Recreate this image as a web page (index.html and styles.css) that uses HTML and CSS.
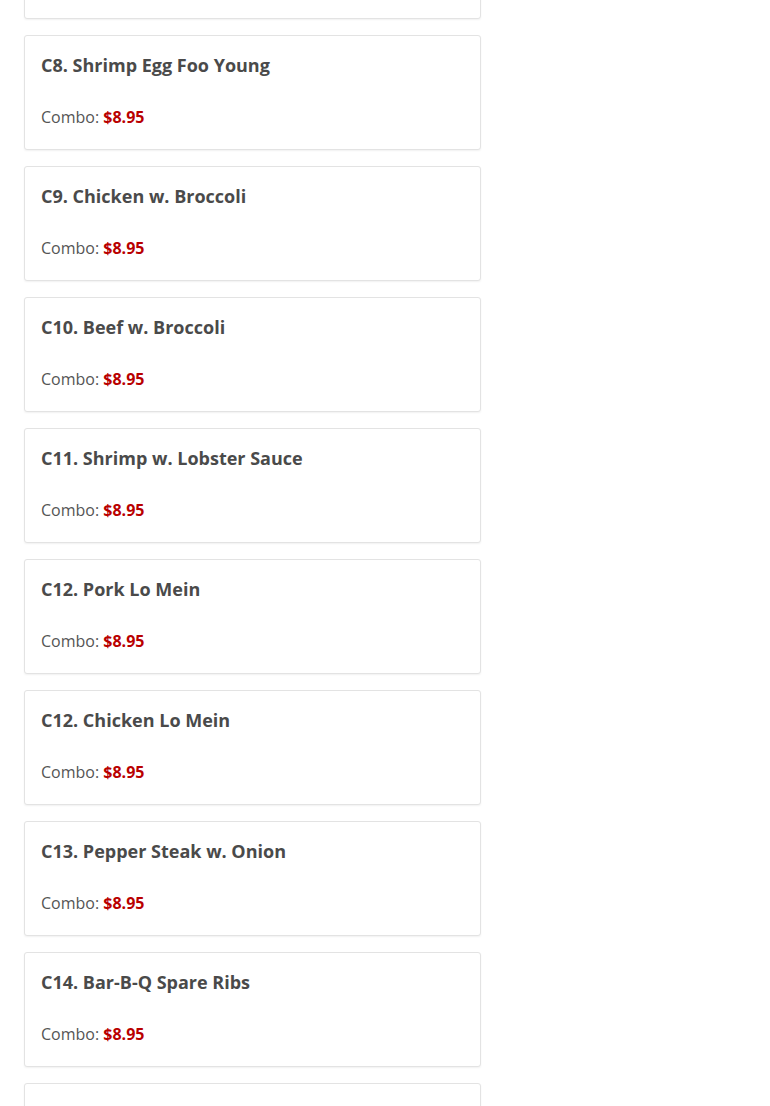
FILE: index.html
```html
<!DOCTYPE html>
<html lang="en">
<head>
<meta charset="utf-8">
<title>Combo Menu</title>
<link rel="stylesheet" href="styles.css">
</head>
<body>
<div class="menu">
  <div class="item"></div>
  <div class="item"><h3 class="item-name">C8. Shrimp Egg Foo Young</h3><p class="item-price">Combo: <span class="price">$8.95</span></p></div>
  <div class="item"><h3 class="item-name">C9. Chicken w. Broccoli</h3><p class="item-price">Combo: <span class="price">$8.95</span></p></div>
  <div class="item"><h3 class="item-name">C10. Beef w. Broccoli</h3><p class="item-price">Combo: <span class="price">$8.95</span></p></div>
  <div class="item"><h3 class="item-name">C11. Shrimp w. Lobster Sauce</h3><p class="item-price">Combo: <span class="price">$8.95</span></p></div>
  <div class="item"><h3 class="item-name">C12. Pork Lo Mein</h3><p class="item-price">Combo: <span class="price">$8.95</span></p></div>
  <div class="item"><h3 class="item-name">C12. Chicken Lo Mein</h3><p class="item-price">Combo: <span class="price">$8.95</span></p></div>
  <div class="item"><h3 class="item-name">C13. Pepper Steak w. Onion</h3><p class="item-price">Combo: <span class="price">$8.95</span></p></div>
  <div class="item"><h3 class="item-name">C14. Bar-B-Q Spare Ribs</h3><p class="item-price">Combo: <span class="price">$8.95</span></p></div>
  <div class="item"></div>
</div>
</body>
</html>
```
FILE: styles.css
```css
html, body {
  margin: 0;
  padding: 0;
  background: #fff;
  overflow: hidden;
}
body {
  font-family: "Open Sans", "Liberation Sans", sans-serif;
  color: #555;
}
.menu {
  display: flex;
  flex-direction: column;
  gap: 16px;
  width: 457px;
  margin-left: 24px;
  margin-top: -96px;
}
.item {
  box-sizing: border-box;
  height: 115px;
  padding: 16px 16px 20px;
  border: 1px solid #e3e3e3;
  border-radius: 3px;
  box-shadow: 0 1px 2px rgba(0,0,0,0.06);
  background: #fff;
}
.item-name {
  margin: 0 0 26px;
  font-size: 18px;
  line-height: 27px;
  font-weight: 700;
  color: #4a4a4a;
}
.item-price {
  margin: 0;
  font-size: 16px;
  line-height: 24px;
  color: #555;
}
.price {
  font-weight: 700;
  color: #b90000;
}
```
